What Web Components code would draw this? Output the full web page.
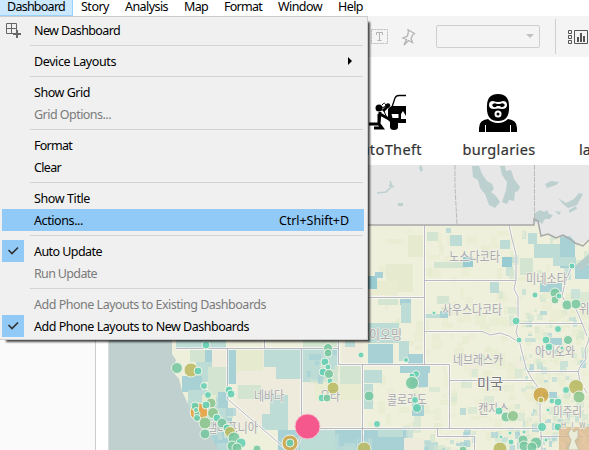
<!DOCTYPE html>
<html lang="en">
<head>
<meta charset="utf-8">
<title>Dashboard</title>
<style>
html,body{margin:0;height:450px;overflow:hidden;background:#fff}
</style>
</head>
<body>
<dash-app></dash-app>
<script>
class Base extends HTMLElement{
  constructor(){super();this.attachShadow({mode:'open'});}
  draw(html){this.shadowRoot.innerHTML=html;}
}
// Text spaced out to a given width in pixels.
customElements.define('fit-text',class extends Base{
  connectedCallback(){
    this.draw('<style>:host{display:inline-block;white-space:pre}</style><span><slot></slot></span>');
    const w=+this.getAttribute('w');
    if(!w)return;
    const s=this.shadowRoot.querySelector('span'),n=this.textContent.length;
    this.style.letterSpacing='0px';
    this.style.letterSpacing=((w-s.getBoundingClientRect().width)/n)+'px';
  }
});
customElements.define('menu-bar',class extends Base{
  connectedCallback(){
    const items=[['Dashboard',58,73],['Story',28,44],['Analysis',43,59],['Map',24,40],['Format',38,54],['Window',44,60],['Help',25,41]];
    this.draw(`<style>:host{display:flex;height:16px;background:#fff}
    div{box-sizing:border-box;height:16px;line-height:14px;display:flex;justify-content:center}
    .on{background:#cce8ff;border:solid #99d1ff;border-width:0 1px 1px 0}</style>`+
    items.map((i,k)=>`<div class="${k?'':'on'}" style="width:${i[2]}px"><fit-text w="${i[1]}">${i[0]}</fit-text></div>`).join(''));
  }
});
customElements.define('tool-bar',class extends Base{
  connectedCallback(){
    this.draw(`<style>:host{display:flex;height:41px;background:#f4f4f4;padding-left:370px;box-sizing:border-box;align-items:center;overflow:hidden}
    svg{display:block;flex:none}.sel{box-sizing:border-box;width:104px;height:23px;border:1px solid #cfcfcf;border-radius:2px;margin-left:19px;display:flex;align-items:center;justify-content:flex-end;padding-right:5px}
    i{width:1px;height:35px;background:#cfcfcf;margin:0 12px 0 15px;flex:none}</style>
    <svg width="47" height="20" fill="none"><rect x="1.5" y="2.5" width="16" height="14" stroke="#b9b9b9" stroke-dasharray="2 1"/>
    <path d="M6.5 8V5.5h6V8M9.5 5.5V13M7.5 13.5h4" stroke="#b3b3b3"/>
    <path d="M37.500 2.500l7 4-1.500 1-2 4 1.500 4-4-2-4.500 4.500 2.500-5.500-3.500-1.500 4.500-2 1-5z" stroke="#b3b3b3" stroke-width="1.3"/></svg>
    <div class="sel"><svg width="8" height="5"><path d="M0 0h8L4 4z" fill="#c2c2c2"/></svg></div><i></i>
    <svg width="21" height="16" fill="none" stroke="#555"><path d="M.5 1.500h3v3h-3zM.5 6.500h3v3h-3zM.5 11.500h3v3h-3zM6.500 1.500h13v13h-13z"/><path d="M10 8v5M13 4v9M16 7v6" stroke-width="2"/></svg>`);
  }
});
customElements.define('crime-tile',class extends Base{
  connectedCallback(){
    this.draw(`<style>:host{display:flex;flex-direction:column;align-items:center;width:112px;flex:none;padding-top:36px;box-sizing:border-box;height:108px;font:400 14.5px/20px "Noto Sans",sans-serif;color:#333;-webkit-text-stroke:.2px #333}
    .i{height:40px;margin-bottom:6px}</style><div class="i"><slot name="icon"></slot></div><fit-text w="${this.getAttribute('w')}">${this.getAttribute('label')}</fit-text>`);
  }
});
customElements.define('crime-map',class extends Base{
  connectedCallback(){
    const C={l:'#e6ebcf',g:'#d3e5d0',t:'#bcdcd5',b:'#a7d1d5',c:'#eeebdc',y:'#e9ecd0',d:'#98cbd2'};
    let seed=7;const r=()=>(seed=(seed*16807)%2147483647)/2147483647;
    const out=[];
    const R=(c,x,y,w,h,o=1)=>out.push(`<rect x="${x}" y="${y}" width="${w}" height="${h}" fill="${C[c]}" opacity="${o}"/>`);
    const scatter=(x,y,w,h,n,pal,m)=>{for(let k=0;k<n;k++)R(pal[Math.floor(r()*pal.length)],Math.round(x+r()*w),Math.round(y+r()*h),3+Math.round(r()*m),3+Math.round(r()*m),.7);};
    scatter(368,228,140,140,50,'lylyyl',11);
    scatter(424,290,95,145,80,'llyyyglc',8);
    scatter(505,228,84,95,55,'lgtyygl',9);
    scatter(520,310,69,135,230,'lgtbyyltylg',5);
    scatter(440,425,110,25,65,'lgtgyb',5);
    scatter(365,366,84,62,25,'yllg',10);
    scatter(365,430,80,20,25,'btgy',11);
    [['l',408,235,15,22],['l',386,264,27,28],['y',372,281,25,14],['g',427,232,11,9],['t',450,235,12,11],['t',446,228,5,5],['g',434,262,33,6],['d',463,257,10,10],['d',368,276,9,13],['b',375,272,8,6],['b',400,299,11,6],['g',378,299,20,6],['g',437,296,12,8],
     ['t',401,303,10,20],['t',368,323,31,20],['b',368,344,25,20],['t',399,341,10,20],['b',408,354,15,10],['t',424,314,24,4],['b',440,311,8,7],['b',400,366,30,7],['b',410,373,18,14],['t',364,370,18,13],['t',364,384,9,25],['b',412,402,12,14],
     ['t',500,240,10,9],['d',502,257,10,10],['b',560,234,15,34],['t',534,244,26,14],['t',528,233,9,11],['b',540,283,22,9],['t',490,282,9,11],['t',553,257,23,9],['g',520,258,13,17],['b',575,265,14,14],['t',460,408,6,7],['b',543,392,14,6],['b',550,338,12,7],
     ['b',364,430,42,20],['t',378,428,25,9],['c',404,438,20,12]
    ].forEach(a=>R(...a));
    // Western states
    [['t',176,340,50,8],['c',210,349,17,18],['g',190,350,20,12],['t',196,362,16,20],['b',182,376,20,16],['t',188,390,40,60],['g',208,367,19,30],['b',205,350,7,12],['l',202,395,14,7],['b',218,392,10,16],['b',212,418,20,32],['b',228,350,8,34],['c',236,348,66,80],['l',236,348,27,23],['t',264,349,37,18],['t',276,366,25,13],['g',238,385,23,14],['t',262,395,26,35],['c',250,400,20,14],['t',302,349,36,34],['g',320,366,18,25],['c',302,382,60,46],['y',315,382,47,18],['g',340,366,21,18],['c',330,405,20,20],['b',278,430,84,20],['t',300,430,35,20],['c',342,341,20,22],['g',303,340,35,8],['t',345,341,10,6]].forEach(a=>R(...a));
    scatter(205,405,22,40,20,'tbgt',9);scatter(305,350,32,30,16,'tgtb',9);scatter(280,430,80,20,14,'btt',15);
    const dot=(x,y,d,c)=>`<circle cx="${x}" cy="${y}" r="${d}" fill="${c}" fill-opacity=".85" stroke="#eef3e5" stroke-width="1"/>`;
    const G='#73c69d',T='#5fcfb2',O='#b8b85e',N='#d2a340',E='#8bc48b';
    const dots=[[177,368,5.5,G],[191,370,7,O],[198,371,4,T],[206,345,4,T],[204,386,3.5,T],[208,395,3.5,T],[199,412,9,'#eda03a'],[195,406,4,T],[197,414,3,T],[196,410,2.500,T],[211,403,5,E],[206,405,4,T],[213,413,5.500,E],[205,423,6,E],[205,434,5,G],[197,418,3.500,T],[217,418,4,T],[222,423,5,G],[228,429,5,G],[229,390,4,T],[231,394,4,T],[227,428,4,T],[230,432,5.500,O],[234,438,6,G],[241,443,5,T],[232,446,5,G],[257,449,4,G],[237,448,5,G],
      [328,348,4.500,G],[328,353,4,G],[325,362,4,T],[323,372,4,T],[328,367,3,T],[329,374,4.500,G],[330,381,3,T],[333,388,6,O],[322,398,4,T],[327,398,4,G],[361,355,3,T],[290,443,8,N],[290,443,4,T],[364,449,7,O],
      [369,396,5,G],[377,424,3.500,T],[406,360,2.500,T],[416,374,3.500,T],[412,376,3,T],[412,383,6.500,G],[415,400,3.500,T],[417,408,4.500,T],[434,313,2,T],[463,450,4,G],
      [572,266,3,T],[535,295,3,T],[555,293,5,G],[555,300,4,G],[559,296,3,T],[567,305,5,G],[516,321,4,T],[519,340,3,T],[558,329,3.500,T],[546,340,4,T],[549,347,4,T],[568,340,4.500,G],[562,348,2,T],[576,304,5,G],[541,395,8,N],[541,400,3,O],[576,387,7.500,O],[579,397,6,E],[566,390,3.500,T],[552,401,3,T],[558,402,4,T],[548,410,2,T],[499,411,4,T],[506,417,5,G],[513,416,5.500,E],[542,427,4.500,T],[558,427,4,T],[510,433,2,T],[501,437,2,T],[524,432,2,T],[511,442,3,T],[523,440,5,G],[524,446,5,G],[500,449,7,O],[536,443,6,G],[532,447,5,G],[546,440,2,T]].map(a=>dot(...a)).join('');
    const L=(x,y,w,t,s=13)=>`<text x="${x}" y="${y}" textLength="${w}" lengthAdjust="spacingAndGlyphs" font-size="${s}">${t}</text>`;
    const borders='M424.500 225V364M368 297.500H424M424 280.500H516M424 331.500H483L490 335L500 333L509 336L517 341M509 225L512 239L516 254L516 280L514 289L518 297V323L516 332L519 340L522 352L526 368L532 379L540 390V418L542 450M518 323.500H582M527 371.500H578L581 365L586 359L585 350L589 339M582 323L576 309L566 303L562 296L565 283L572 266M582 323L587 336M362.500 364.500H449.500V428M449 380.500H534M362.500 364V450M301.500 428.500H540M338.500 340V364.500H362M176 348.500H338M264.500 340V348M227.500 348V399L287 450M301.500 348V435L296 450M437.500 428V436.500H474.500V450M540 436.500H589M578 371L580 382L587 393';
    this.draw(`<style>:host{display:block;width:480px;height:285px;flex:none}svg{display:block}
    text{font-family:"Noto Sans CJK KR",sans-serif;fill:#a9a9b0;stroke:#f3f3e7;stroke-width:1.500px;paint-order:stroke}</style>
    <svg width="480" height="285" viewBox="109 165 480 285">
    <rect x="109" y="165" width="480" height="285" fill="#eff0dc"/><g shape-rendering="crispEdges">${out.join('')}</g>
    <path d="M109 340H172L172 354L176 360L173 372L179 379L182 391L187 402L193 414L202 424L210 436L219 450H109Z" fill="#bfd0cf"/>
    <path d="M360 165H589V240L578 245L570 236L556 237L548 233L541 236L538 225L534 223V225H360Z" fill="#e7e7e7"/>
    <g fill="#bcd0d0"><path d="M472 166h7l3 8 5 7 5 3 2 5-3 3 5 4 4 6-5 6-6-3-4-11-5-6-2-8-5-3zM500 166h5l1 5 5-1 3 9 6 8-2 4-3 1-1 9-5-1-2 4-5-2 4-12 1-8-5-7zM419 168l2-4 2 6-2 2zM398 203h5v3h-5zM558 198l8 5 8-4 5-6 4 1-6 11-9 3-5-4zM545 184l6-3 8 1-3 3-9 3zM569 210l7-4 1 3-8 4z"/><path d="M535 213l5-3 4 2 3-2 2 4 4 1-3 4h-5l-3 5-4-3-3 1zM555 211l6 1-2 3z"/><path d="M377 193l9-1 6-6-2-5M389 185l5 2" fill="none" stroke="#bcd0d0" stroke-width="1.500"/></g>
    <path d="M575 266l14-12v10l-8 7z" fill="#b5cecb"/>
    <path d="${borders}" fill="none" stroke="#fff" stroke-opacity=".55" stroke-width="3"/>
    <path d="${borders}" fill="none" stroke="#b9b9c3"/>
    <path d="M360 225H534V219L538 221L541 236L548 234L556 238L563 235L570 239L575 243L583 246L589 240" fill="none" stroke="#a8a8a8" stroke-width="1.500"/>
    <path d="M455 165V187L457 224M534.500 165V219" fill="none" stroke="#bbb" stroke-dasharray="5 1"/>
    ${L(449,261,51,'노스다코타')}${L(442,314,60,'사우스다코타')}${L(526,283,41,'미네소타')}${L(358,339,44,'와이오밍')}${L(453,364,50,'네브래스카')}${L(535,356,40,'아이오와')}${L(478,413,31,'캔자스')}${L(553,416,29,'미주리')}${L(387,404,40,'콜로라도')}${L(254,400,30,'네바다')}${L(207,432,51,'캘리포니아')}${L(320,400,20,'유타')}${L(579,313,42,'위스콘신')}
    <text x="477" y="389" textLength="26" lengthAdjust="spacingAndGlyphs" font-size="15" style="fill:#77777c;stroke:#f6f6ee">미국</text>
    ${dots}<circle cx="307.500" cy="426.500" r="12.500" fill="#f4588c" stroke="#f6c1cf"/>
    <rect x="559" y="427" width="30" height="23" fill="#dbb78c" fill-opacity=".75"/><path d="M568 434l3-6 3 4 4-3v8l-3 4 4 9h-11l3-10z" fill="#e9edd9" stroke="#c4bea4"/><path d="M580 432l5 5-2 6 6 5M560 442l5 3-2 5" fill="none" stroke="#e9c9a5" stroke-width="2"/>
    <text x="561" y="428" font-size="7" letter-spacing="5.500" style="fill:#a4a49a">HIW</text></svg>`);
  }
});
customElements.define('menu-item',class extends Base{
  connectedCallback(){
    const h=k=>this.hasAttribute(k);
    this.draw(`<style>:host{display:flex;height:22px;line-height:23px;align-items:flex-start;color:${h('disabled')?'#7b7b7b':'#000'};background:${h('active')?'#91c9f7':'none'}}
    .g{width:22px;height:22px;margin-right:10px;background:${h('checked')?'#91c9f7':'none'}}.k{margin-left:auto;margin-right:15px}svg{display:block}</style>
    <div class="g">${h('checked')?'<svg width="22" height="22"><path d="M6.500 10l3.500 3.500L16 7.500" fill="none" stroke="#333" stroke-width="1.700"/></svg>':''}${h('add')?'<svg width="22" height="22" fill="none" stroke="#666"><path d="M13 14.500H4.500v-10h10V12M9.500 4.500v10M4.500 9.500h10"/><path d="M11 15h8M15 11v8" stroke-width="2"/></svg>':''}</div>
    <fit-text w="${this.getAttribute('w')}">${this.textContent}</fit-text><div class="k">${h('key')?`<fit-text w="70">${this.getAttribute('key')}</fit-text>`:''}${h('sub')?'<svg width="6" height="22" style="margin-right:-4px"><path d="M1 7v8l4-4z"/></svg>':''}</div>`);
  }
});
customElements.define('menu-line',class extends Base{
  connectedCallback(){this.draw('<style>:host{display:block;height:1px;margin:4px 1px 4px 28px;background:#d4d4d4}</style>');}
});
customElements.define('drop-menu',class extends Base{
  connectedCallback(){
    this.draw(`<style>:host{display:block;box-sizing:border-box;height:324px;width:368px;background:#f0f0f0;border:solid #ccc;border-width:1px 1px 1px 0;padding:2px 3px 2px 2px;box-shadow:4px 4px 2px -2px rgba(0,0,0,.7)}</style>
    <menu-item add w="86">New Dashboard</menu-item><menu-line></menu-line>
    <menu-item sub w="82">Device Layouts</menu-item><menu-line></menu-line>
    <menu-item w="56">Show Grid</menu-item><menu-item disabled w="77">Grid Options...</menu-item><menu-line></menu-line>
    <menu-item w="38">Format</menu-item><menu-item w="27">Clear</menu-item><menu-line></menu-line>
    <menu-item w="56">Show Title</menu-item><menu-item active w="49" key="Ctrl+Shift+D">Actions...</menu-item><menu-line></menu-line>
    <menu-item checked w="68">Auto Update</menu-item><menu-item disabled w="63">Run Update</menu-item><menu-line></menu-line>
    <menu-item disabled w="232">Add Phone Layouts to Existing Dashboards</menu-item><menu-item checked w="215">Add Phone Layouts to New Dashboards</menu-item>`);
  }
});
customElements.define('dash-app',class extends Base{
  connectedCallback(){
    this.draw(`<style>:host{display:block;position:relative;width:589px;height:450px;overflow:hidden;font:12.500px "Noto Sans","Noto Sans CJK KR",sans-serif;color:#000}
    .body{display:flex;height:393px}.side{width:95px;background:#fafafa;border-right:1px solid #ccc;flex:none}
    .main{width:481px;padding-left:12px;flex:none}.tiles{display:flex;padding-left:223px;height:108px;overflow:hidden}.map{border-left:1px solid #d8dede}
    drop-menu{position:absolute;left:0;top:16px}svg{display:block}</style>
    <menu-bar></menu-bar><tool-bar></tool-bar>
    <div class="body"><div class="side"></div><div class="main"><div class="tiles">
    <crime-tile w="70" label="autoTheft"><svg slot="icon" width="38" height="38" viewBox="0 0 38 38"><path d="M24 14l3-9q1-2.500 4-2.500h7" fill="none" stroke="#000" stroke-width="1.300"/><path d="M22 14q1-1 3-1h13v17h-8v4q0 3-4 3t-4-3v-5l-2-2v-11z"/><path d="M23.500 21h7v4h-6zM33 21l2-3 3 5v3h-5z" fill="#fff"/><circle cx="11" cy="15" r="3.500"/><circle cx="20" cy="12.500" r="2.200"/><path d="M12 19l-1 12H1M11 21v10l3 4H6M12 21l9 5M15 18l5-5" fill="none" stroke="#000" stroke-width="3"/><path d="M14 12q3-4 4 1l-4 2M16 18l3 7" fill="none" stroke="#000"/></svg></crime-tile>
    <crime-tile w="73" label="burglaries" style="margin-left:-9px;width:130px"><svg slot="icon" width="38" height="39" viewBox="0 0 38 39" style="margin-right:3px"><path d="M8 13Q8 1 19 1T30 13Q31 28 19 28T8 13M0 39v-4q0-8 9-9 4 4 10 4t10-4q9 1 9 9v4h-6v-7h-1v7H7v-7H6v7z"/><path d="M14 8q5 2 10 0 4 0 4 4t-5 4q-4-1-8 0-5 0-5-4t4-4" fill="#fff"/><path d="M13 12q2-3 5-1h3q3-2 5 1-3 4-5 1h-3q-3 3-5-1"/><circle cx="19" cy="21" r="3.500" fill="#fff"/><circle cx="19" cy="21" r="1.500"/></svg></crime-tile>
    <crime-tile w="50" label="larceny" style="margin-left:-16px"></crime-tile></div>
    <div class="map"><crime-map></crime-map></div></div></div><drop-menu></drop-menu>`);
  }
});
</script>
</body>
</html>
